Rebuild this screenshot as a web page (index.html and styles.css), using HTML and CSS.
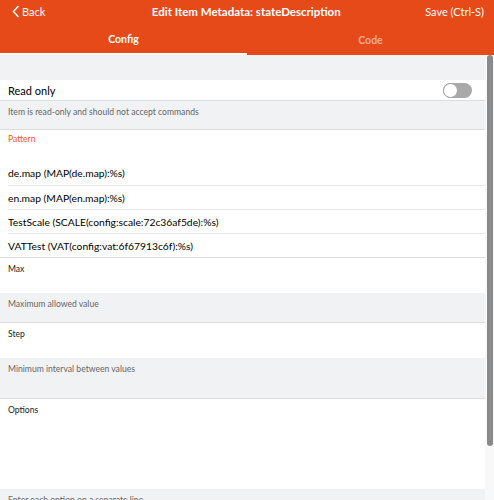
FILE: index.html
```html
<!DOCTYPE html>
<html>
<head>
<meta charset="utf-8">
<link rel="stylesheet" href="styles.css">
</head>
<body>
<div class="app">
  <header class="navbar">
    <div class="nav-top">
      <div class="back">
        <svg class="chev" width="8" height="13" viewBox="0 0 8 13"><path d="M6.5 1 L1.5 6.5 L6.5 12" fill="none" stroke="#fff" stroke-width="1.5"/></svg>
        <span>Back</span>
      </div>
      <div class="title">Edit Item Metadata: stateDescription</div>
      <div class="save">Save (Ctrl-S)</div>
    </div>
    <div class="tabs">
      <div class="tab active">Config</div>
      <div class="tab">Code</div>
    </div>
  </header>
  <div class="page">
    <main class="content">
      <div class="spacer"></div>
      <div class="row toggle-row">
        <span class="row-title">Read only</span>
        <span class="toggle"><span class="knob"></span></span>
      </div>
      <div class="info info-a">Item is read-only and should not accept commands</div>
      <div class="section-label">Pattern</div>
      <ul class="list">
        <li>de.map (MAP(de.map):%s)</li>
        <li>en.map (MAP(en.map):%s)</li>
        <li>TestScale (SCALE(config:scale:72c36af5de):%s)</li>
        <li>VATTest (VAT(config:vat:6f67913c6f):%s)</li>
      </ul>
      <div class="field field-max"><div class="label">Max</div></div>
      <div class="info info-b">Maximum allowed value</div>
      <div class="field field-step"><div class="label">Step</div></div>
      <div class="info info-c">Minimum interval between values</div>
      <div class="field field-options"><div class="label">Options</div></div>
      <div class="info info-d">Enter each option on a separate line</div>
    </main>
    <div class="track"><div class="thumb"></div></div>
  </div>
</div>
</body>
</html>
```
FILE: styles.css
```css
html, body {
  margin: 0;
  padding: 0;
  height: 500px;
  overflow: hidden;
  background: #fff;
}
body {
  font-family: Lato, "Open Sans", sans-serif;
  color: #000;
}
.app {
  width: 494px;
  height: 500px;
  display: flex;
  flex-direction: column;
}
.navbar {
  background: #e64a19;
  color: #fff;
  flex: 0 0 auto;
}
.nav-top {
  height: 22px;
  display: flex;
  align-items: center;
  justify-content: space-between;
  padding: 0 10px 0 12px;
  font-size: 11px;
}
.back {
  display: flex;
  align-items: center;
  gap: 2px;
}
.chev { display: block; }
.title {
  font-weight: bold;
  font-size: 11.5px;
  margin-left: 22px;
}
.tabs {
  height: 33px;
  display: flex;
}
.tab {
  flex: 1;
  display: flex;
  align-items: center;
  justify-content: center;
  font-size: 10.5px;
  font-weight: bold;
  color: rgba(255,255,255,0.55);
  box-sizing: border-box;
  padding-top: 2px;
}
.tab.active {
  color: #fff;
  border-bottom: 2px solid #fff;
}
.page {
  flex: 1;
  display: flex;
  min-height: 0;
}
.content {
  flex: 1;
  min-width: 0;
  background: #fff;
}
.track {
  width: 9px;
  background: #f8f8f8;
  display: flex;
  justify-content: center;
}
.thumb {
  width: 6px;
  height: 391px;
  background: #8a8a8a;
  border-radius: 3px;
  margin-left: 1px;
}
.spacer {
  height: 25px;
  background: #f1f2f4;
}
.row {
  height: 20px;
  display: flex;
  align-items: center;
  justify-content: space-between;
  padding: 0 13px 0 8px;
  border-bottom: 1px solid #dcdcdc;
  font-size: 11px;
}
.toggle {
  width: 29px;
  height: 15px;
  border-radius: 8px;
  background: #a9a9a9;
  display: flex;
  align-items: center;
  box-sizing: border-box;
}
.knob {
  width: 15px;
  height: 15px;
  border-radius: 50%;
  background: #fff;
  border: 1px solid #a0a0a0;
  box-sizing: border-box;
}
.info {
  background: #f1f2f4;
  color: #666;
  font-size: 8.6px;
  padding: 0 8px;
  box-sizing: border-box;
  border-bottom: 1px solid #dcdcdc;
}
.info-a { height: 29px; padding-top: 6px; }
.info-b { height: 30px; padding-top: 6px; }
.info-c { height: 41px; padding-top: 6px; }
.info-d { height: 30px; padding-top: 6px; border-bottom: 0; }
.section-label {
  height: 31px;
  color: #f05a2e;
  font-size: 8.6px;
  padding: 4px 8px 0;
  box-sizing: border-box;
}
.list {
  list-style: none;
  margin: 0;
  padding: 0;
  border-bottom: 1px solid #dcdcdc;
}
.list li {
  height: 24px;
  line-height: 24px;
  font-size: 10.3px;
  margin-left: 8px;
  border-top: 1px solid #e6e6e6;
  box-sizing: border-box;
}
.list li:first-child { border-top: 0; }
.field {
  padding: 6px 8px 0;
  box-sizing: border-box;
}
.field-max { height: 35px; }
.field-step { height: 35px; }
.field-options { height: 90px; }
.label {
  font-size: 8.6px;
  color: #222;
}
```
